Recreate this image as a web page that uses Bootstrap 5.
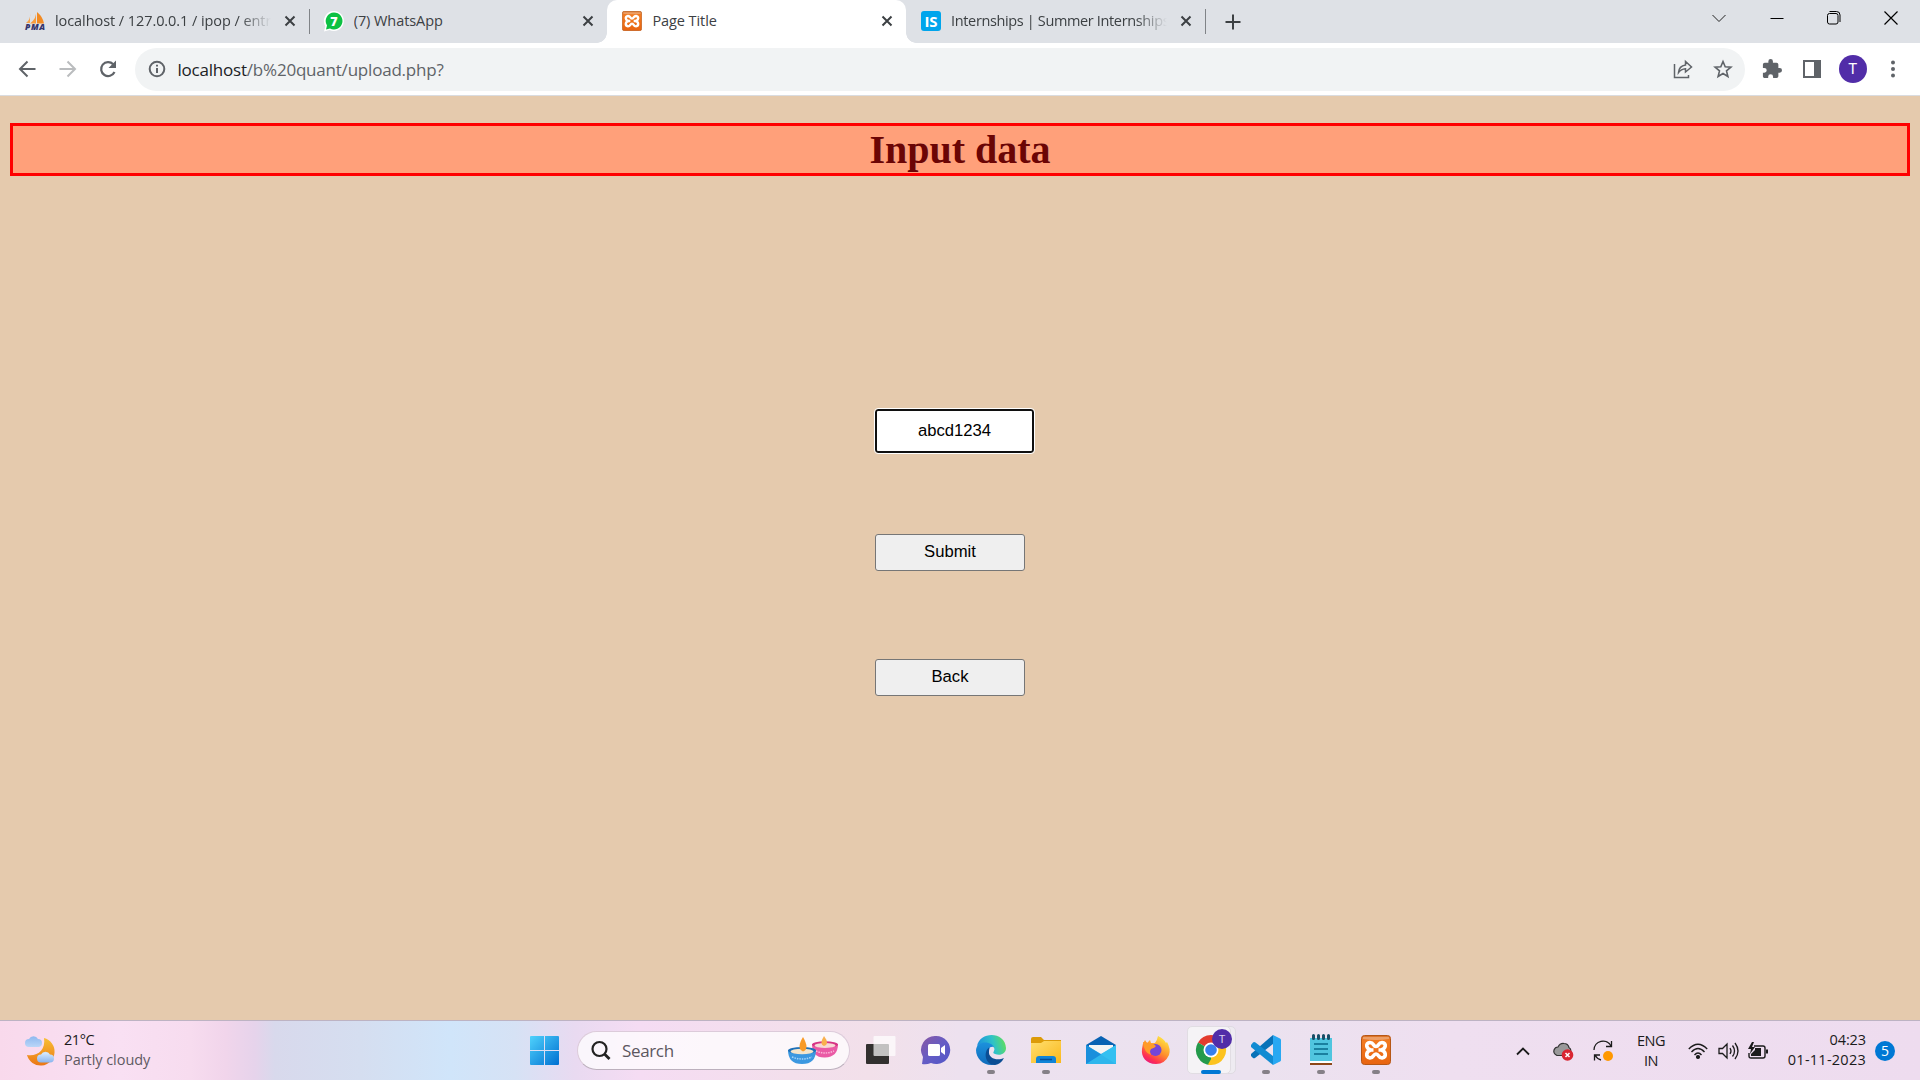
<!DOCTYPE html>
<html lang="en">
<head>
<meta charset="utf-8">
<meta name="viewport" content="width=device-width, initial-scale=1">
<title>Page Title</title>
<link href="https://cdn.jsdelivr.net/npm/bootstrap@5.3.0/dist/css/bootstrap.min.css" rel="stylesheet">
<style>
body{height:1080px;overflow:hidden;font-family:"Open Sans","Noto Sans",sans-serif;color:#3c4043;font-size:14px;line-height:20px}
svg{display:block;flex:none;overflow:visible}
.tabstrip{height:43px;background:#dee1e6;padding-left:10px}
.btab{width:298.7px;height:43px;padding:0 9px 2px 15px;position:relative}
.btab .ttl{width:216px;margin-left:10px;overflow:hidden;white-space:nowrap;font-size:14.5px;letter-spacing:-.07px}
.btab .snug{letter-spacing:-.36px}
.btab .fade-end{-webkit-mask-image:linear-gradient(90deg,#000 185px,transparent 216px);mask-image:linear-gradient(90deg,#000 185px,transparent 216px)}
.btab.current{background:#fff;border-radius:10px 10px 0 0}
.btab.current::before,.btab.current::after{content:"";position:absolute;bottom:0;width:10px;height:10px}
.btab.current::before{left:-10px;background:radial-gradient(circle at 0 0,transparent 9.5px,#fff 10px)}
.btab.current::after{right:-10px;background:radial-gradient(circle at 100% 0,transparent 9.5px,#fff 10px)}
.btab.sep::after{content:"";position:absolute;right:-1px;top:9px;width:1px;height:25px;background:#808387}
.shut{margin-left:auto}
.winbtn{width:57.4px;height:36px}
.toolbar{height:53px;background:#fff;border-bottom:1px solid #dadce0;padding:0 8px 0 7px}
.tool{width:40.5px;height:42px}
.tool.last{width:39px}
.omni{height:43px;border-radius:22px;background:#f1f3f4;padding:0 2px 0 13px;margin-left:6.5px;margin-right:7px}
.url{font-size:17px;letter-spacing:-.21px;color:#5f6368;margin-left:11.5px;padding-top:1px}
.url b{font-weight:400;color:#202124}
.avatar{width:28px;height:28px;background:#512da8;color:#fff;font:15px/28px Roboto,sans-serif}
.sheet{height:924px;background:#e5caad;padding:27px 10px 0}
.heading{height:53px;border:3px solid red;background:#ffa07a;color:#6b0505;font:bold 40px/47px "Liberation Serif",serif;margin:0}
.entry{margin:233px 0 0 865px}
.entry input,.entry button{display:block;font:16.67px/20px "Liberation Sans",Arial,sans-serif;color:#000}
.entry input{width:159px;height:44px;border:2px solid #101010;outline:1px solid #fff;border-radius:3px;text-align:center;padding:0;background:#fff}
.entry button{width:150px;height:37px;border:1px solid #767676;border-radius:3px;background:#efefef;padding:0 0 2px}
.taskbar{height:60px;border-top:1px solid #bdb3c3;background:linear-gradient(90deg,#f9d9ec 0,#f9e0f3 120px,#f7dcef 190px,#f1d5eb 225px,#e6d3eb 255px,#d8d9ec 275px,#d5def0 360px,#d0e5fa 450px,#d6e2f5 515px,#e9daf1 575px,#f5dcf3 640px,#f3dfec 790px,#f2e0ea 870px,#ede1ef 960px,#ebe2ef 1250px,#efdff0 1450px,#eedcef 1920px);color:#1b1b1b;font-size:14.5px}
.weather{width:505px;padding:0 0 2px 24px;letter-spacing:-.45px}
.startbtn{width:49px}
.pill{width:273px;height:39px;border-radius:20px;background:rgba(255,255,255,.75);border:1px solid #dccbda;border-bottom-color:#bcb0bd;padding:0 11px 0 13px;margin:0 3.5px 0 0}
.pill span{font-size:17px;color:#5c575f;letter-spacing:-.35px;margin-left:12px}
.app{width:55px;height:59px;padding-top:14px;position:relative}
.app i{position:absolute;bottom:6px;left:23.5px;width:8px;height:4px;border-radius:2px;background:#858087}
.app.on i{width:20px;left:17.5px;background:#0078d4}
.app.on::before{content:"";position:absolute;left:8px;top:5px;width:44px;height:48px;border-radius:5px;border:1px solid #dfdbe2;background:#eeebf1}
.app.on::after{content:"";position:absolute;left:3px;top:5px;width:44px;height:48px;border-radius:5px;border:1px solid #e1dde3;background:#f5f3f6}
.app.on svg,.app.on i{z-index:2}.app.on svg{position:relative}
.lang{width:60px;text-align:center;letter-spacing:-.5px;line-height:20px}
.clock{width:98px;text-align:right;letter-spacing:-.1px;padding-bottom:2px}
.clock .date{letter-spacing:.25px}
.note{width:20px;height:20px;background:#0078d4;color:#fff;font-size:14px;line-height:19px;margin:0 25px 0 9px}
</style>
<script src="https://cdn.jsdelivr.net/npm/bootstrap@5.3.0/dist/js/bootstrap.bundle.min.js"></script>
</head>
<body>
<svg width="0" height="0" class="position-absolute">
<defs>
<symbol id="x" viewBox="0 0 20 20"><path d="M5.5 5.500l9 9M14.500 5.500l-9 9" stroke="#3c4043" stroke-width="2" fill="none"/></symbol>
<linearGradient id="xo" x2="0" y2="1"><stop stop-color="#d9742b"/><stop offset=".2" stop-color="#f27a20"/><stop offset="1" stop-color="#e86410"/></linearGradient>
<symbol id="xampp" viewBox="0 0 30 30"><rect x=".5" y=".5" width="29" height="29" rx="3" fill="url(#xo)" stroke="#b65716"/><path d="M2 2h26v2q-13 2-26 0z" fill="#fff" opacity=".3"/><path d="M10 15C5 14 4 8 9 7.500c4 0 3 4 6 4s2-4 6-4c5 .5 4 6.500-1 7.500 5 1 6 7 1 8-4 0-3-4-6-4s-2 4-6 4c-5-1-4-7 1-8zM10 15h2.500M20 15h-2.500" fill="none" stroke="#fff" stroke-width="3.600" stroke-linejoin="round"/></symbol>
</defs>
</svg>

<header>
<div class="tabstrip d-flex">
  <div class="btab sep d-flex align-items-center">
    <svg width="20" height="20" viewBox="0 0 20 20"><path d="M5 2Q6 8 1 12h4z" fill="#f5a34c"/><path d="M11 0Q12 7 5 12.500h6z" fill="#f89c3c"/><path d="M12 1q6 5 7 11.500h-7z" fill="#f28a22"/><text x="0" y="19" font-family="Open Sans" font-size="8.500" font-weight="800" font-style="italic" textLength="20" fill="#35346b">PMA</text></svg>
    <span class="ttl fade-end">localhost / 127.0.0.1 / ipop / entries</span>
    <svg class="shut" width="20" height="20"><use href="#x"/></svg>
  </div>
  <div class="btab d-flex align-items-center">
    <svg width="20" height="20" viewBox="0 0 20 20"><path d="M10 0a10 10 0 1 1-4.500 19L0 20.500 1.300 15A10 10 0 0 1 10 0z" fill="#fff"/><path d="M10 1.500a8.500 8.500 0 1 1-4 16L2 18.500 3 14.500a8.500 8.500 0 0 1 7-13z" fill="#0cc143"/><text x="10" y="14.500" text-anchor="middle" font-family="Open Sans" font-size="12.500" font-weight="800" fill="#fff">7</text></svg>
    <span class="ttl">(7) WhatsApp</span>
    <svg class="shut" width="20" height="20"><use href="#x"/></svg>
  </div>
  <div class="btab current d-flex align-items-center">
    <svg width="20" height="20"><use href="#xampp"/></svg>
    <span class="ttl">Page Title</span>
    <svg class="shut" width="20" height="20"><use href="#x"/></svg>
  </div>
  <div class="btab sep d-flex align-items-center">
    <svg width="20" height="20"><rect width="20" height="20" rx="3" fill="#00a5ec"/><text x="10" y="15.500" text-anchor="middle" font-family="Open Sans" font-size="15" font-weight="700" textLength="13" fill="#fff">IS</text></svg>
    <span class="ttl snug fade-end">Internships | Summer Internships</span>
    <svg class="shut" width="20" height="20"><use href="#x"/></svg>
  </div>
  <div class="d-flex align-items-center justify-content-center" style="width:56px"><svg width="16" height="16"><path d="M8 .5v15M.5 8h15" stroke="#3c4043" stroke-width="2"/></svg></div>
  <div class="ms-auto d-flex">
    <div class="winbtn d-flex align-items-center justify-content-center"><svg width="14" height="14"><path d="M.5 4l6.500 6.500L13.500 4" fill="none" stroke="#222"/></svg></div>
    <div class="winbtn d-flex align-items-center justify-content-center"><svg width="14" height="14"><path d="M.5 7.500h13" stroke="#000"/></svg></div>
    <div class="winbtn d-flex align-items-center justify-content-center"><svg width="14" height="14" fill="none" stroke="#000"><rect x=".5" y="2.500" width="10.500" height="10.500" rx="2"/><path d="M2.500 .5h7q3.500 0 3.500 3.500v7"/></svg></div>
    <div class="winbtn d-flex align-items-center justify-content-center"><svg width="14" height="14"><path d="M.5.5l13 13M13.500.5l-13 13" stroke="#000" stroke-width="1.200"/></svg></div>
  </div>
</div>
<nav class="toolbar d-flex align-items-center">
  <div class="tool d-flex align-items-center justify-content-center"><svg width="18" height="18" fill="none" stroke="#5f6368" stroke-width="2"><path d="M17.500 9H2M9.500 1.500L2 9l7.500 7.500"/></svg></div>
  <div class="tool d-flex align-items-center justify-content-center"><svg width="18" height="18" fill="none" stroke="#babcbe" stroke-width="2"><path d="M.5 9H16M8.500 1.500L16 9l-7.500 7.500"/></svg></div>
  <div class="tool d-flex align-items-center justify-content-center"><svg width="18" height="18"><path d="M15.500 12A7 7 0 1 1 14.200 4.200" fill="none" stroke="#5f6368" stroke-width="2.200"/><path d="M17 .5v7.500H9.500z" fill="#5f6368"/></svg></div>
  <div class="omni flex-grow-1 d-flex align-items-center">
    <svg width="18" height="18" fill="none" stroke="#5f6368" stroke-width="2"><circle cx="9" cy="9" r="7.300"/><path d="M9 8v5M9 4.700v1.900"/></svg>
    <span class="url"><b>localhost</b>/b%20quant/upload.php?</span>
    <div class="tool ms-auto d-flex align-items-center justify-content-center"><svg width="20" height="20" fill="none" stroke="#5f6368" stroke-width="1.500"><path d="M1.500 5v13.500h14V16M5.500 13.500Q6 7 12.500 6V2.500l6 5.500-6 5V9.700Q8 10 5.500 13.500z"/></svg></div>
    <div class="tool last d-flex align-items-center justify-content-center"><svg width="18" height="18"><path d="M9 1.500l2.200 5.300 5.700.4-4.400 3.700 1.400 5.600L9 13.500l-4.900 3 1.400-5.600L1.100 7.200l5.700-.4z" fill="none" stroke="#5f6368" stroke-width="1.600"/></svg></div>
  </div>
  <div class="tool d-flex align-items-center justify-content-center"><svg width="20" height="20" viewBox="1 1 22 22"><path d="M20.500 11H19V7a2 2 0 0 0-2-2h-4V3.500a2.500 2.500 0 0 0-5 0V5H4a2 2 0 0 0-2 2v3.800h1.500a2.700 2.700 0 0 1 0 5.400H2V20c0 1.100.9 2 2 2h3.800v-1.500a2.700 2.700 0 0 1 5.400 0V22H17a2 2 0 0 0 2-2v-4h1.500a2.500 2.500 0 0 0 0-5z" fill="#5f6368"/></svg></div>
  <div class="tool d-flex align-items-center justify-content-center"><svg width="18" height="18"><path d="M0 0h18v18H0zM2 2v14h9V2z" fill="#5f6368" fill-rule="evenodd"/></svg></div>
  <div class="tool d-flex align-items-center justify-content-center"><span class="avatar rounded-circle text-center">T</span></div>
  <div class="tool last d-flex align-items-center justify-content-center"><svg width="4" height="18" fill="#5f6368"><circle cx="2" cy="2.500" r="2"/><circle cx="2" cy="9" r="2"/><circle cx="2" cy="15.500" r="2"/></svg></div>
</nav>
</header>

<main class="sheet">
  <h1 class="heading text-center">Input data</h1>
  <form class="entry">
    <input type="text" value="abcd1234" aria-label="data">
    <button type="button" style="margin-top:81px">Submit</button>
    <button type="button" style="margin-top:88px">Back</button>
  </form>
</main>

<footer class="taskbar d-flex align-items-center">
  <div class="weather d-flex align-items-center">
    <svg width="32" height="30" viewBox="0 0 32 30"><defs><linearGradient id="mo" x2="0" y2="1"><stop stop-color="#f8bf35"/><stop offset="1" stop-color="#eb7615"/></linearGradient><linearGradient id="cl" x2="0" y2="1"><stop stop-color="#8db8ef"/><stop offset=".65" stop-color="#d3e7fd"/><stop offset="1" stop-color="#88b5ef"/></linearGradient></defs><path d="M20 3a14 14 0 1 1-17 17c10 2 19-5 17-17z" fill="url(#mo)"/><path d="M5 12a4 4 0 0 1 0-8 5 5 0 0 1 9 0 4 4 0 0 1 0 8zM17 27.500a4 4 0 0 1 0-8 5 5 0 0 1 9 0 4 4 0 0 1 0 8z" fill="url(#cl)"/></svg>
    <div class="ms-2"><div>21°C</div><div style="color:#605a62;letter-spacing:-.05px">Partly cloudy</div></div>
  </div>
  <div class="startbtn"><div style="padding-left:25px;"><svg width="29" height="29"><defs><linearGradient id="wi" x2="1" y2="1"><stop stop-color="#4fd2fc"/><stop offset="1" stop-color="#006fd1"/></linearGradient></defs><path d="M0 1q0-1 1-1h13v14H0zM15 0h13q1 0 1 1v13H15zM0 15h14v14H1q-1 0-1-1zM15 15h14v13q0 1-1 1H15z" fill="url(#wi)"/></svg></div></div>
  <div style="width:23px"></div>
  <div class="pill d-flex align-items-center">
    <svg width="19" height="19" fill="none" stroke="#222" stroke-width="2.200"><circle cx="8.500" cy="8" r="7"/><path d="M13.500 13l5 5" stroke-width="2.800"/></svg>
    <span>Search</span>
    <svg class="ms-auto" width="50" height="28" viewBox="0 0 50 28"><path d="M24 7h26q0 13-13 13.500T24 7z" fill="#ea5aa5"/><ellipse cx="37" cy="7.500" rx="13" ry="3.200" fill="#d63384"/><ellipse cx="37" cy="8.500" rx="10.500" ry="2.600" fill="#f8d8d5"/><path d="M36-1q6 8 0 10-5-2 0-10z" fill="#f9b04d"/><path d="M28 14q9 4 18 0" stroke="#ffd0e8" stroke-width="1.500" stroke-dasharray="1.500 1" fill="none" opacity=".8"/><path d="M0 13h28q0 14-14 14T0 13z" fill="#3c98e0"/><ellipse cx="14" cy="13.500" rx="14" ry="3.500" fill="#1e70b8"/><ellipse cx="14" cy="14.500" rx="11.500" ry="2.800" fill="#f3e5cb"/><path d="M15 0q7 12 0 14.500-7-3 0-14.500z" fill="#f99a26"/><path d="M4 20q10 4 20 0" stroke="#bfe4ff" stroke-width="1.500" stroke-dasharray="1.500 1" fill="none" opacity=".8"/></svg>
  </div>
  <div class="app d-flex justify-content-center align-items-start"><svg width="30" height="30"><rect x="0" y="9" width="23" height="20" rx="1" fill="#32302f"/><rect x="7.500" y="1" width="22" height="20" rx="1" fill="#fff" opacity=".7"/></svg></div>
  <div class="app d-flex justify-content-center align-items-start"><svg width="30" height="30"><defs><linearGradient id="ch" x2="1" y2="1"><stop stop-color="#8a58a3"/><stop offset=".5" stop-color="#655dc5"/><stop offset="1" stop-color="#5055c7"/></linearGradient></defs><path d="M15 1a14 14 0 1 1-5 27q-5 2-9 1l1-7A14 14 0 0 1 15 1z" fill="url(#ch)"/><rect x="7" y="9" width="12" height="12" rx="1.500" fill="#fff"/><path d="M20 13l4-3v10l-4-3z" fill="#fff"/></svg></div>
  <div class="app d-flex justify-content-center align-items-start"><svg width="30" height="30"><defs><linearGradient id="e1" y1="0.200"><stop stop-color="#1c93dd"/><stop offset=".5" stop-color="#2fc2c7"/><stop offset="1" stop-color="#68e349"/></linearGradient><linearGradient id="e2" x2="0" y2="1"><stop stop-color="#1c91dc"/><stop offset="1" stop-color="#106bbb"/></linearGradient></defs><path d="M1 11C4-4 29-4 30 13c0 6-6 8-11 6-3-1-1-2-.5-5-1-5-12-8-17.500-3z" fill="url(#e1)"/><path d="M0 15C1 5 15 6 18 12c-5-1-6 3-6 7 0 5 6 9 9 10C10 33 0 25 0 15z" fill="url(#e2)"/><path d="M13 12.500C7 17 9 30 19 30q6-1 9-7c-6 3-16 1-15-7 0-2 1-3 0-3.500z" fill="#0b4e94"/></svg><i></i></div>
  <div class="app d-flex justify-content-center align-items-start"><svg width="30" height="30"><defs><linearGradient id="fo" x2="1" y2="1"><stop stop-color="#ffdf70"/><stop offset="1" stop-color="#fab81b"/></linearGradient></defs><path d="M0 4q0-2 2-2h8l3 3h17v5H0z" fill="#dc9b08"/><path d="M0 8h10l3-2h17v22H0z" fill="url(#fo)"/><path d="M5 28v-4q0-3 3-3h14q3 0 3 3v4z" fill="#1084d7"/><path d="M9 24.500h12" stroke="#064e96" stroke-width="1.500"/></svg><i></i></div>
  <div class="app d-flex justify-content-center align-items-start"><svg width="30" height="30"><path d="M0 10L15 1l15 9v7H0z" fill="#0862b3"/><path d="M3 10h24v8H3z" fill="#f4f4f4"/><path d="M0 10l15 9 15-9v19H0z" fill="#2fb9ef"/><path d="M0 10l30 19H0z" fill="#198fdc"/><path d="M0 29l30-19v19z" fill="#36c3f2" opacity=".75"/></svg></div>
  <div class="app d-flex justify-content-center align-items-start"><svg width="30" height="30"><defs><linearGradient id="ff" x1=".8" y1="0" x2=".2" y2="1"><stop stop-color="#fff044"/><stop offset=".5" stop-color="#ff8e2c"/><stop offset=".8" stop-color="#ff3150"/><stop offset="1" stop-color="#e31587"/></linearGradient></defs><path d="M17 1q6 3 8 7l1-1q4 7 2 13-4 9-13 9C5 29 0 22 1 14q0-5 3-9l2 3 3-3 1 3h4q2-2 3-7z" fill="url(#ff)"/><circle cx="14.500" cy="15" r="6" fill="#7445d8"/><path d="M2 7q4 0 6 2 4-1 7 2-1 2-5 3-2 3 0 6-7-2-8-13z" fill="#ff9b28"/></svg></div>
  <div class="app on d-flex justify-content-center align-items-start"><svg width="30" height="30" viewBox="0 0 30 30"><path d="M15 15L2 7.500A15 15 0 0 1 28 7.500z" fill="#e33b2e"/><path d="M15 15v15A15 15 0 0 1 2 7.500z" fill="#249a4b"/><path d="M15 15l13-7.500A15 15 0 0 1 15 30z" fill="#fcc31e"/><path d="M21.500 18.800L15 30q-2 0-3-.5l5-9z" fill="#fcc31e"/><circle cx="15" cy="15" r="7.500" fill="#fff"/><circle cx="15" cy="15" r="5.800" fill="#367fec"/><circle cx="26" cy="4" r="10" fill="#512da8"/><text x="26" y="8" font-family="Roboto" font-size="11" text-anchor="middle" fill="#d9ceee">T</text></svg><i></i></div>
  <div class="app d-flex justify-content-center align-items-start"><svg width="30" height="30"><path d="M22 0v9L4 23q-1 .5-2 0l-2-2v-2z" fill="#0872b8"/><path d="M0 11v-1l2-2.500q1-1 2.500 0L22 21v9L0 12z" fill="#118bd2"/><path d="M22 0l7 3.500q1 .5 1 1.500v20q0 1-1 1.500L22 30z" fill="#28a8f2"/></svg><i></i></div>
  <div class="app d-flex justify-content-center align-items-start"><svg width="30" height="30"><path d="M4 3h22v23H4z" fill="#50c5df"/><path d="M4 26h22v2H4z" fill="#fff"/><path d="M4 28h22v2H4z" fill="#8d4719"/><path d="M8 9h14M8 14h14M8 19h14" stroke="#08698a" stroke-width="1.700"/><path d="M7.500.5v3M12.500.5v3M17.500.5v3M22.500.5v3" stroke="#174f67" stroke-width="3" stroke-linecap="round"/></svg><i></i></div>
  <div class="app d-flex justify-content-center align-items-start"><svg width="30" height="30"><use href="#xampp"/></svg><i></i></div>

  <div class="ms-auto d-flex align-items-center">
    <svg width="14" height="8" fill="none" stroke="#1b1b1b" stroke-width="1.800"><path d="M1 7.500l6-6 6 6"/></svg>
    <svg width="21" height="20" style="margin:0 19px 0 23px"><path d="M4 14.500q-4-2-3-5.500 1-3 4-3 2-4 6-3.500 4 0 5 4 2 1 2 4v4z" fill="#9a999a" stroke="#333" stroke-width="1.200"/><circle cx="14.500" cy="14" r="5.800" fill="#d92632"/><path d="M12.500 12l4 4M16.500 12l-4 4" stroke="#fff" stroke-width="1.500"/></svg>
    <svg width="21" height="22"><path d="M1 10A9 9 0 0 1 18 6M18.500 1v5.500H13M1.500 20.500V15H7M2 15q2 4 6 5" fill="none" stroke="#1b1b1b" stroke-width="1.300"/><circle cx="15" cy="16" r="5" fill="#ff9800"/></svg>
    <div class="lang" style="margin-left:7px"><div>ENG</div><div>IN</div></div>
    <svg width="20" height="16" style="margin-left:7px" fill="none" stroke="#1b1b1b" stroke-width="1.400"><path d="M.8 6Q10-3.500 19.200 6M3.500 9Q10 2 16.500 9M6.500 12Q10 8 13.500 12"/><circle cx="10" cy="14" r="1.400" fill="#1b1b1b"/></svg>
    <svg width="21" height="18" style="margin-left:10px" fill="none" stroke="#1b1b1b" stroke-width="1.300"><path d="M1 6.500h3.500L9 2v14l-4.500-4.500H1zM12 6q2 3 0 6M14.500 3.500q4 5.500 0 11M17 1q6 8 0 16"/></svg>
    <svg width="20" height="18" style="margin-left:9px"><path d="M6 4h9q2 0 2 2v8q0 2-2 2H3q-2 0-2-2v-3" fill="none" stroke="#1b1b1b" stroke-width="1.400"/><path d="M7 6h6v8H3v-2l4-4zM18 7.500h2v4h-2zM4 0L0 7h3l-1 5 5-7H4l2-5z" fill="#1b1b1b"/></svg>
    <div class="clock"><div>04:23</div><div class="date">01-11-2023</div></div>
    <span class="note rounded-circle text-center">5</span>
  </div>
</footer>
</body>
</html>
